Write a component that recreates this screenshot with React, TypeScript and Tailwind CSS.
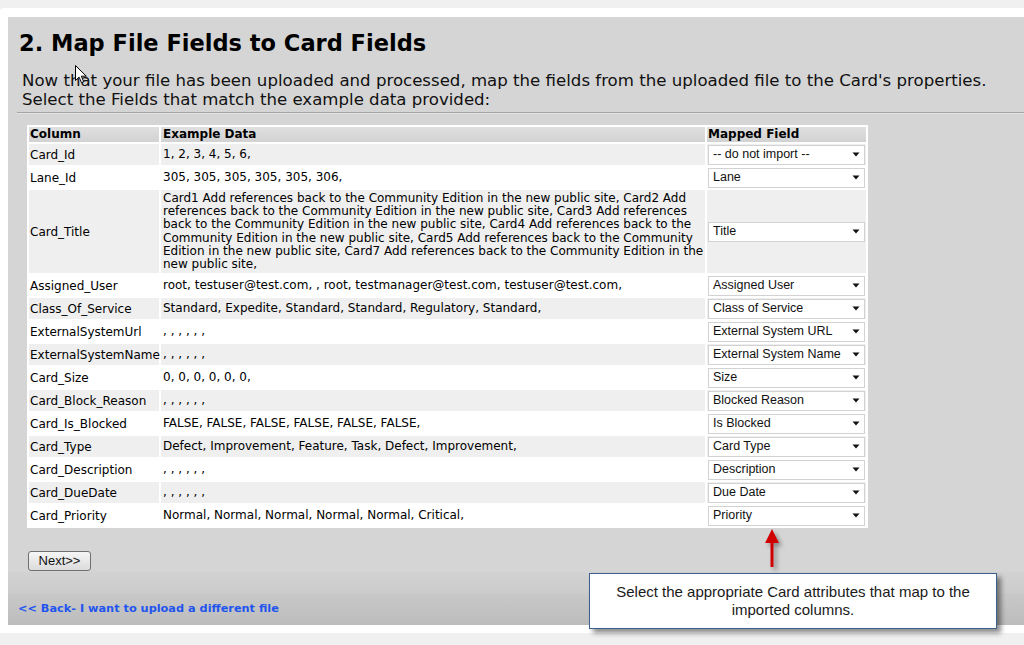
import React from "react";

type Row = { name: string; data: string | string[]; field: string };

const rows: Row[] = [
  { name: "Card_Id", data: "1, 2, 3, 4, 5, 6,", field: "-- do not import --" },
  { name: "Lane_Id", data: "305, 305, 305, 305, 305, 306,", field: "Lane" },
  {
    name: "Card_Title",
    data: [
      "Card1 Add references back to the Community Edition in the new public site, Card2 Add",
      "references back to the Community Edition in the new public site, Card3 Add references",
      "back to the Community Edition in the new public site, Card4 Add references back to the",
      "Community Edition in the new public site, Card5 Add references back to the Community",
      "Edition in the new public site, Card7 Add references back to the Community Edition in the",
      "new public site,",
    ],
    field: "Title",
  },
  { name: "Assigned_User", data: "root, testuser@test.com, , root, testmanager@test.com, testuser@test.com,", field: "Assigned User" },
  { name: "Class_Of_Service", data: "Standard, Expedite, Standard, Standard, Regulatory, Standard,", field: "Class of Service" },
  { name: "ExternalSystemUrl", data: ", , , , , ,", field: "External System URL" },
  { name: "ExternalSystemName", data: ", , , , , ,", field: "External System Name" },
  { name: "Card_Size", data: "0, 0, 0, 0, 0, 0,", field: "Size" },
  { name: "Card_Block_Reason", data: ", , , , , ,", field: "Blocked Reason" },
  { name: "Card_Is_Blocked", data: "FALSE, FALSE, FALSE, FALSE, FALSE, FALSE,", field: "Is Blocked" },
  { name: "Card_Type", data: "Defect, Improvement, Feature, Task, Defect, Improvement,", field: "Card Type" },
  { name: "Card_Description", data: ", , , , , ,", field: "Description" },
  { name: "Card_DueDate", data: ", , , , , ,", field: "Due Date" },
  { name: "Card_Priority", data: "Normal, Normal, Normal, Normal, Normal, Critical,", field: "Priority" },
];

function FieldSelect({ value }: { value: string }) {
  return (
    <div className="ml-[1px] flex h-[20px] w-[157px] items-center justify-between border border-[#d2d2d2] bg-white pl-[4px] pr-[4px] font-['Liberation_Sans',Arial,sans-serif] text-[12.5px] text-[#111]">
      <span className="whitespace-nowrap">{value}</span>
      <svg width="8" height="5" viewBox="0 0 8 5">
        <path d="M0.5 0.5h7L4 4.5z" fill="#111" />
      </svg>
    </div>
  );
}

export default function App() {
  return (
    <div className="relative h-[645px] w-[1024px] overflow-hidden bg-[#f0f0f0] pt-[8px] font-['DejaVu_Sans',Verdana,sans-serif] text-black">
      <div className="rounded-tl-[4px] bg-white pb-[8px] pl-[8px] pt-[9px]">
        <div className="flex h-[608px] flex-col bg-[#d5d5d5]">
          <h1 className="pl-[11px] pt-[12px] text-[22.5px] font-bold leading-[28px] text-black">
            2. Map File Fields to Card Fields
          </h1>
          <p className="mt-[14px] whitespace-nowrap pl-[14px] text-[16.6px] leading-[19px] text-[#111]">
            Now that your file has been uploaded and processed, map the fields from the uploaded file to the Card's properties.
            <br />
            Select the Fields that match the example data provided:
          </p>
          <div className="ml-[9px] mt-[3px] h-px bg-[#a6a6a6]" />
          <div className="ml-[9px] h-px bg-[#e2e2e2]" />

          <div className="mt-[11px] pl-[19px]">
            <table className="w-[841px] table-fixed border-separate border-spacing-[2px] bg-white text-[12px]">
              <colgroup>
                <col className="w-[130px]" />
                <col className="w-[544px]" />
                <col className="w-[159px]" />
              </colgroup>
              <thead>
                <tr className="h-[15px] bg-gradient-to-b from-[#e0e0e0] to-[#d2d2d2] text-left font-bold leading-[15px]">
                  <th className="px-[1px]">Column</th>
                  <th className="px-[2px]">Example Data</th>
                  <th className="px-[1px]">Mapped Field</th>
                </tr>
              </thead>
              <tbody>
                {rows.map((r, i) => (
                  <tr
                    key={r.name}
                    className={`${i % 2 === 0 ? "bg-[#efefef]" : "bg-white"} ${Array.isArray(r.data) ? "h-[83px]" : "h-[21px]"}`}
                  >
                    <td className="whitespace-nowrap px-[1px]">{r.name}</td>
                    <td className="whitespace-nowrap px-[2px] leading-[13.3px]">
                      {Array.isArray(r.data)
                        ? r.data.map((line, j) => (
                            <React.Fragment key={j}>
                              {line}
                              {j < r.data.length - 1 && <br />}
                            </React.Fragment>
                          ))
                        : r.data}
                    </td>
                    <td className="p-0">
                      <FieldSelect value={r.field} />
                    </td>
                  </tr>
                ))}
              </tbody>
            </table>
          </div>

          <div className="mt-[20px] pl-[20px]">
            <button className="h-[20px] w-[63px] rounded-[3px] border border-[#707070] bg-gradient-to-b from-[#f6f6f6] to-[#dcdcdc] font-['Liberation_Sans',Arial,sans-serif] text-[13px] leading-[18px] text-[#111]">
              Next&gt;&gt;
            </button>
          </div>

          <div className="mt-auto h-[21px] bg-gradient-to-b from-[#d2d2d2] to-[#cdcccd]" />
          <div className="flex h-[32px] items-center bg-gradient-to-b from-[#c9c9c9] to-[#bcbcbc] pl-[10px] pt-[1px]">
            <a href="#" className="text-[11.3px] font-bold text-[#1f55ee]">
              &lt;&lt; Back- I want to upload a different file
            </a>
          </div>
        </div>
      </div>

      {/* annotation arrow */}
      <svg
        className="absolute left-[764px] top-[528px] drop-shadow-[3px_3px_2px_rgba(0,0,0,0.35)]"
        width="16"
        height="40"
        viewBox="0 0 16 40"
      >
        <path d="M8 1L1 15h5.5v24h3V15H15z" fill="#d00000" />
      </svg>

      {/* annotation callout */}
      <div className="absolute left-[589px] top-[573px] flex h-[56px] w-[408px] items-center justify-center border border-[#3f5f8f] bg-white text-center font-['Liberation_Sans',Arial,sans-serif] text-[15px] leading-[18px] text-[#1a1a1a] shadow-[4px_4px_5px_rgba(0,0,0,0.45)]">
        <p>
          Select the appropriate Card attributes that map to the
          <br />
          imported columns.
        </p>
      </div>

      {/* mouse cursor */}
      <svg className="absolute left-[75px] top-[65px]" width="12" height="19" viewBox="0 0 12 19">
        <path d="M0.5 0.5v15l3.6-3.4 2.4 5.6 2.2-1-2.4-5.5h5z" fill="white" stroke="black" strokeWidth="1" />
      </svg>
    </div>
  );
}
